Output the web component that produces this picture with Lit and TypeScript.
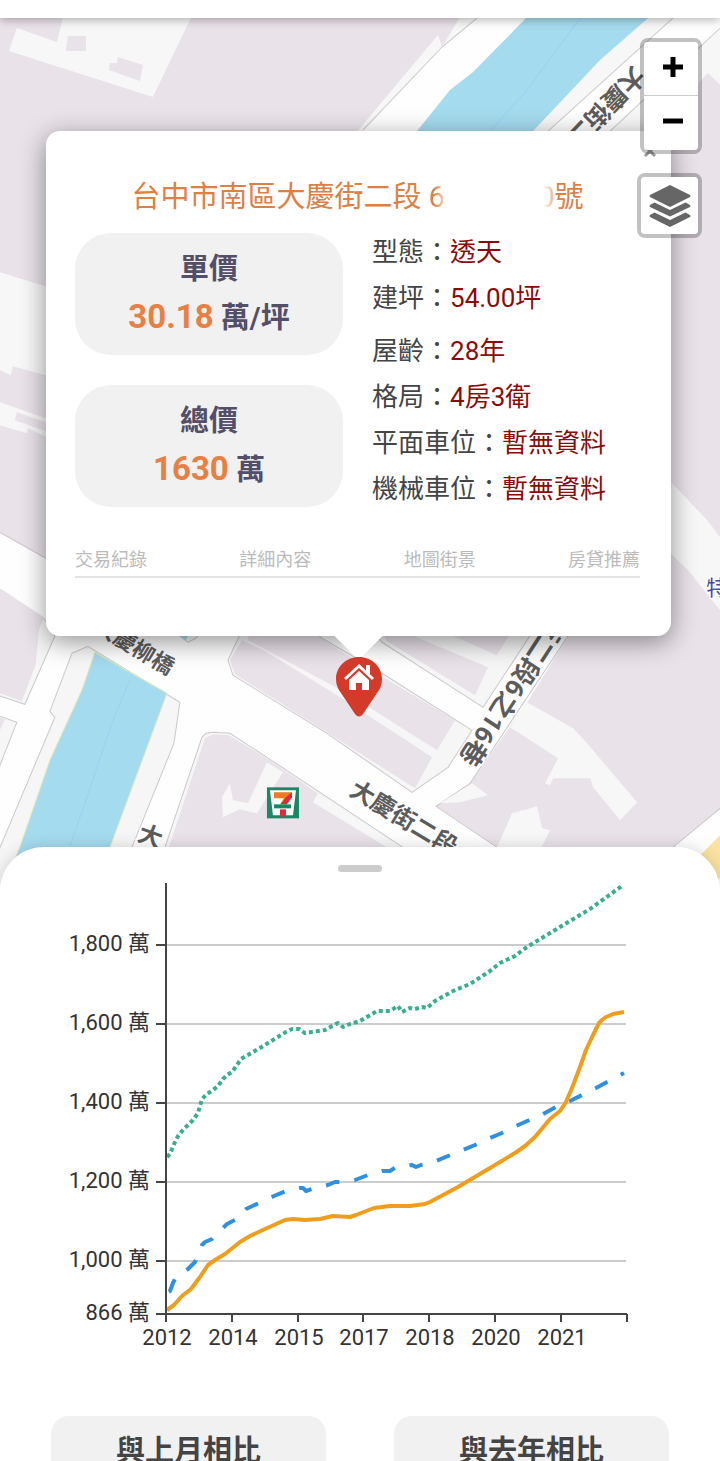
import { LitElement, html, css, svg } from "lit";
import { customElement } from "lit/decorators.js";

const FONT = css`Roboto, "Noto Sans CJK TC", "Noto Sans", sans-serif`;

@customElement("map-canvas")
class MapCanvas extends LitElement {
  static styles = css`
    :host { display: block; }
    svg { display: block; width: 100%; height: 100%; }
    .block { fill: #e9e2e9; }
    .light { fill: #f7f7f7; }
    .lot { fill: #f6f6f6; stroke: #cbc9cb; stroke-width: 1; }
    .edge { fill: none; stroke: #cbc9cb; stroke-width: 1; }
    .road { fill: #fefefe; }
    .river { fill: #a5dbef; }
    .bank { stroke: #dfe6b8; stroke-width: 1; }
    .flow { fill: none; stroke: #97d3f2; stroke-width: 1; }
    .street { font-family: ${FONT}; font-weight: 700; fill: #5c5c5c; stroke: #fff; stroke-width: 3; paint-order: stroke; dominant-baseline: central; }
    .place { font-family: ${FONT}; font-size: 21px; fill: #4648a0; stroke: #fff; stroke-width: 3; paint-order: stroke; }
  `;

  render() {
    return html`
      <svg viewBox="0 18 720 873" preserveAspectRatio="xMidYMin slice" aria-label="地圖">
        <rect class="block" x="-400" y="18" width="1520" height="900" />

        <g>
          <polygon class="light" points="63,18 191,18 153,97 9,51 17,28 57,42" />
          <polygon class="block" points="68,36 86,36 86,51 66,51" />
          <polygon class="block" points="118,57 143,65 140,81 109,70 110,63 117,63" />
          <polygon class="light" points="0,272 80,297 80,386 46,375 13,366 11,375 0,370" />
          <polygon class="light" points="0,402 80,430 80,452 28,428 27,433 0,425" />
          <polygon class="block" points="17,412 60,427 60,436 15,420" />
        </g>

        <g>
          <polygon class="light" points="470,0 720,0 720,85 708,73 640,140 350,140 438,35 442,47" />
          <polygon class="road" points="477,18 540,18 430,140 355,140 363,130 442,47" />
          <polyline class="edge" points="477,18 442,47 363,130" />
          <polygon class="river" points="526,18 648,18 600,60 533,131 417,131 450,90 473,72" />
          <polyline class="flow" points="580,18 527,90 490,131" />
          <polygon class="road" points="673,18 730,18 605,136 542,136" />
          <polyline class="edge" points="673,18 548,131" />
          <polyline class="edge" points="720,28 610,131" />
          <text class="street" font-size="25" transform="translate(640 71) rotate(134)">大慶街二段</text>
        </g>

        <g>
          <polygon class="road" points="0,532 46,558 200,625 575,625 527,702 470,783 436,806 497,847 560,900 0,900" />
          <polyline class="edge" points="0,532 46,558" />
          <polyline class="edge" points="575,625 470,783 436,806 497,847" />

          <polygon class="lot" points="-5,586 44,618 55,636 25,704 -5,694" />
          <polygon class="block" points="0,588 44,617 39,630 36,664 22,701 0,693" />
          <polygon class="lot" points="-5,714 17,722 -5,778" />
          <polygon class="block" points="0,717 5,719 0,730" />

          <polygon class="lot" points="72,653 88,646 180,702 174,743 132,847 110,895 -20,895 55,717 50,711" />
          <polygon class="river bank" points="95,652 167,693 110,847 90,895 0,895 20,847 50,760 82,690" />
          <polyline class="flow" points="130,680 113,720 70,847" />
          <polygon class="lot" points="172,630 202,630 196,638 188,642" />
          <polygon class="river" points="174,630 190,630 186,640" />

          <polygon class="lot" points="242,630 300,625 382,673 472,730 448,767 412,792 327,733 233,675 228,660" />
          <polygon class="block" points="250,630 300,625 375,672 455,720 437,750 347,693 248,640" />
          <polygon class="block" points="242,640 264,650 345,700 432,757 415,788 327,732 235,674 230,660" />
          <polygon class="lot" points="370,628 540,620 483,707 382,642" />
          <polygon class="block" points="380,628 400,630 488,667 475,695 387,641" />
          <polygon class="block" points="440,630 512,630 497,655" />

          <polygon class="lot" points="165,847 202,737 206,733 213,732 230,733 267,757 403,847 460,895 150,895" />
          <polygon class="block" points="169,847 205,738 213,734 229,735 267,758 360,822 403,850 440,895 155,895" />
          <polygon class="light" points="267,762 283,772 257,813 240,809 223,817 222,797 230,783 233,800 248,803" />
          <polygon class="light" points="318,793 403,849 395,852 313,802" />

          <polygon class="light" points="527,702 573,728 587,743 637,802 620,820 593,787 590,778 553,778 550,785 545,783 558,758 510,727" />
          <polygon class="light" points="472,783 488,795 460,802 440,803" />
          <polygon class="light" points="512,813 537,806 542,828 550,830 540,850 497,847" />
        </g>

        <g>
          <polygon class="light" points="665,475 672,483 707,520 720,537 720,610 688,570 665,548" />
          <polygon class="road" points="675,845 720,808 760,775 760,900 640,900" />
          <polyline class="edge" points="655,862 675,845 720,808" />
          <polygon points="700,855 720,835 740,820 740,860 705,890" fill="#fae3a0" />
        </g>

        <g>
          <text class="street" font-size="22" transform="translate(172 669) rotate(31)" text-anchor="end">大慶柳橋</text>
          <text class="street" font-size="24" transform="translate(352 787) rotate(31)">大慶街二段</text>
          <text class="street" font-size="24" transform="translate(139 832) rotate(20)">大</text>
          <text class="street" font-size="26" transform="translate(466 763) rotate(123)" text-anchor="end">大慶街二段6之16巷</text>
          <text class="place" x="706" y="595">特</text>
        </g>

        <g>
          <rect x="267" y="787" width="32" height="31" fill="#1a8765" />
          <path d="M270 790H296L293 815H273Z" fill="#fff" />
          <path d="M274 792H292V796L286 804H280L284 798H274Z" fill="#ee7a27" />
          <path d="M292 792V797L287 804H281L286 797Z" fill="#df2a37" />
          <path d="M280 809H286V816H280Z" fill="#df2a37" />
          <rect x="274" y="804" width="17" height="4" fill="#1a8765" />
        </g>
      </svg>
    `;
  }
}

@customElement("price-popup")
class PricePopup extends LitElement {
  static styles = css`
    :host { display: block; position: relative; font-family: ${FONT}; }
    .card { position: relative; box-sizing: border-box; background: #fff; border-radius: 14px; padding: 45px 31px 58px 29px; box-shadow: 0 6px 26px rgba(0, 0, 0, 0.42); }
    .tip { position: absolute; left: 50%; bottom: -24px; width: 48px; height: 24px; margin-left: -24px; background: #fff; clip-path: polygon(0 0, 100% 0, 50% 100%); }
    .close { position: absolute; top: 10px; right: 14px; width: 14px; height: 18px; padding: 0; border: 0; background: none; }
    .close svg { display: block; }
    h1 { margin: 0 0 14px; font-size: 29px; line-height: 43px; font-weight: 400; color: #dd8045; text-align: center; white-space: nowrap; }
    .veil { display: inline-flex; justify-content: space-between; width: 126px; -webkit-mask-image: linear-gradient(90deg, #000 5px, transparent 20px, transparent 114px, #000 132px); mask-image: linear-gradient(90deg, #000 5px, transparent 20px, transparent 114px, #000 132px); }
    .body { display: grid; grid-template-columns: 1fr 1fr; column-gap: 29px; }
    .prices { display: grid; gap: 30px; align-content: start; }
    .price { height: 122px; box-sizing: border-box; padding-top: 12px; border-radius: 36px; background: #f1f1f1; text-align: center; color: #544f69; font-weight: 700; font-size: 29px; line-height: 48px; }
    .price p { margin: 0; }
    .num { color: #e87f43; font-size: 33px; }
    dl { margin: -4px 0 0; font-size: 26px; line-height: 46px; color: #444; white-space: nowrap; }
    dl div { display: flex; }
    dl div:nth-child(2) { margin-bottom: 7px; }
    dt, dd { margin: 0; }
    dd { color: #8b0a0a; }
    nav { display: flex; justify-content: space-between; margin-top: 32px; border-bottom: 2px solid #e4e4e4; }
    nav a { color: #bbb; font-size: 18px; line-height: 32px; text-decoration: none; }
  `;

  private facts = [
    ["型態", "透天"],
    ["建坪", "54.00坪"],
    ["屋齡", "28年"],
    ["格局", "4房3衛"],
    ["平面車位", "暫無資料"],
    ["機械車位", "暫無資料"],
  ];
  private tabs = ["交易紀錄", "詳細內容", "地圖街景", "房貸推薦"];

  render() {
    return html`
      <article class="card">
        <button class="close" aria-label="關閉">
          <svg width="14" height="18" viewBox="0 0 14 18"><path d="M2 5 12 15M12 5 2 15" stroke="#999" stroke-width="3" /></svg>
        </button>
        <h1>台中市南區大慶街二段 <span class="veil"><span>6</span><span>0</span></span>號</h1>
        <div class="body">
          <div class="prices">
            <section class="price"><p>單價</p><p><span class="num">30.18</span> 萬/坪</p></section>
            <section class="price"><p>總價</p><p><span class="num">1630</span> 萬</p></section>
          </div>
          <dl>
            ${this.facts.map(([k, v]) => html`<div><dt>${k}：</dt><dd>${v}</dd></div>`)}
          </dl>
        </div>
        <nav>${this.tabs.map((t) => html`<a href="#">${t}</a>`)}</nav>
      </article>
      <div class="tip"></div>
    `;
  }
}

@customElement("map-controls")
class MapControls extends LitElement {
  static styles = css`
    :host { display: flex; flex-direction: column; align-items: flex-end; gap: 19px; }
    .bar { border: 4px solid rgba(0, 0, 0, 0.24); border-radius: 8px; background-clip: padding-box; }
    button { display: grid; place-items: center; box-sizing: border-box; width: 54px; height: 54px; padding: 0 0 4px 4px; border: 0; background: #fff; border-radius: 0 0 4px 4px; }
    .plus { border-bottom: 1px solid #ccc; border-radius: 4px 4px 0 0; }
    .layers { width: 57px; height: 57px; padding: 0; border-radius: 4px; }
  `;

  render() {
    return html`
      <div class="bar">
        <button class="plus" aria-label="放大">
          <svg width="20" height="20" viewBox="0 0 20 20"><path d="M0 10H20M10 0V20" stroke="#000" stroke-width="5" /></svg>
        </button>
        <button aria-label="縮小">
          <svg width="20" height="20" viewBox="0 0 20 20"><path d="M0 10H20" stroke="#000" stroke-width="5" /></svg>
        </button>
      </div>
      <div class="bar">
        <button class="layers" aria-label="圖層">
          <svg width="42" height="42" viewBox="0 0 42 42" fill="#666">
            <path d="M21 0 41 10Q42 11 41 12L21 22 1 12Q0 11 1 10Z" />
            <path d="M5.500 17.500 21 25 36.500 17.500 41 20Q42 21 41 22L21 31.500 1 22Q0 21 1 20Z" />
            <path d="M5.500 27.500 21 35 36.500 27.500 41 30Q42 31 41 32L21 42 1 32Q0 31 1 30Z" />
          </svg>
        </button>
      </div>
    `;
  }
}

const TRENDS = [
  {
    color: "#3aae8f", dash: "4 3", offset: 0,
    points: "167,1157 170,1154 172,1149 175,1142 178,1136 183,1130 188,1125 193,1120 198,1113 200,1106 202,1099 207,1094 213,1090 218,1086 223,1079 227,1075 232,1072 237,1065 241,1059 248,1055 260,1048 273,1040 286,1032 292,1029 299,1029 305,1033 325,1030 332,1026 338,1023 343,1027 350,1024 360,1021 377,1011 390,1011 398,1006 402,1012 410,1008 415,1009 422,1007 427,1008 435,1001 453,991 470,984 490,971 500,963 515,956 527,947 560,927 590,909 622,886",
  },
  {
    color: "#2f90dd", dash: "14 15", offset: -3,
    points: "166,1293 170,1291 173,1283 175,1279 188,1269 195,1262 202,1245 205,1242 212,1239 224,1227 227,1224 235,1220 246,1209 259,1203 274,1196 286,1191 300,1188 303,1188 306,1191 312,1189 328,1185 335,1182 341,1182 355,1180 368,1175 382,1171 390,1171 396,1167 412,1165 416,1167 421,1165 436,1161 448,1156 463,1150 475,1145 490,1138 502,1133 516,1126 543,1114 556,1107 570,1101 596,1088 624,1073",
  },
  {
    color: "#ef9d1d", dash: "none", offset: 0,
    points: "167,1310 174,1305 182,1296 191,1289 200,1277 208,1265 215,1260 225,1254 240,1242 250,1236 265,1229 285,1220 293,1219 305,1220 320,1219 333,1216 350,1217 356,1215 374,1208 390,1206 410,1206 425,1204 430,1202 458,1187 490,1168 515,1153 525,1146 535,1137 550,1119 560,1111 566,1102 572,1088 580,1067 586,1050 593,1035 599,1023 602,1020 606,1017 613,1014 624,1012",
  },
];

@customElement("price-trend")
class PriceTrend extends LitElement {
  static styles = css`
    :host { display: block; }
    svg { display: block; width: 100%; height: auto; }
    text { font-family: ${FONT}; font-size: 22px; fill: #333; }
    .grid { stroke: #ccc; stroke-width: 2; }
    .axis { fill: none; stroke: #444; stroke-width: 2; }
    .line { fill: none; stroke-width: 4; stroke-linejoin: round; }
  `;

  private rows: [string, number][] = [["1,800 萬", 945], ["1,600 萬", 1024], ["1,400 萬", 1103], ["1,200 萬", 1182], ["1,000 萬", 1261], ["866 萬", 1314]];
  private years = ["2012", "2014", "2015", "2017", "2018", "2020", "2021", ""];

  render() {
    return html`
      <svg viewBox="0 883 720 472" role="img" aria-label="價格走勢">
        ${this.rows.map(([label, y], i) => svg`
          ${i < 5 ? svg`<path class="grid" d="M166 ${y}H626" />` : ""}
          <path class="axis" d="M156 ${y}H166" />
          <text x="150" y=${y + 6} text-anchor="end">${label}</text>`)}
        ${this.years.map((year, i) => svg`
          <path class="axis" d="M${166 + Math.round(i * 65.8)} 1314V1322" />
          <text x=${167 + Math.round(i * 65.8)} y="1345" text-anchor="middle">${year}</text>`)}
        ${TRENDS.map((t) => svg`<polyline class="line" points=${t.points} stroke=${t.color} stroke-dasharray=${t.dash} stroke-dashoffset=${t.offset} />`)}
        <path class="axis" d="M166 883V1314H627" />
      </svg>
    `;
  }
}

@customElement("app-root")
class AppRoot extends LitElement {
  static styles = css`
    :host { display: flex; flex-direction: column; height: 100vh; overflow: hidden; background: #fff; font-family: ${FONT}; }
    header { position: relative; z-index: 1; height: 18px; flex: none; background: #fff; box-shadow: 0 2px 10px rgba(0, 0, 0, 0.3); }
    .map { position: relative; flex: 1; display: flex; flex-direction: column; align-items: center; box-sizing: border-box; padding: 113px 49px 0 46px; }
    map-canvas { position: absolute; inset: 0 0 -44px; }
    map-controls { position: absolute; top: 20px; right: 18px; }
    price-popup { width: 100%; max-width: 640px; }
    .pin { position: relative; display: block; margin-top: 20px; }
    .sheet { position: relative; flex: none; height: 42vh; overflow: hidden; box-sizing: border-box; border-radius: 44px 44px 0 0; background: #fff; }
    .shade { position: relative; flex: none; border-radius: 44px 44px 0 0; box-shadow: 0 0 16px rgba(0, 0, 0, 0.16); }
    .handle { width: 44px; height: 7px; margin: 18px auto 11px; border-radius: 4px; background: #ccc; }
    .compare { display: grid; grid-template-columns: 1fr 1fr; gap: 68px; padding: 61px 51px 40px; }
    .compare section { height: 140px; border-radius: 18px; background: #f1f1f1; text-align: center; }
    h2 { margin: 0; padding-top: 13px; font-size: 29px; line-height: 44px; font-weight: 700; color: #444; }
  `;

  render() {
    return html`
      <header></header>
      <main class="map">
        <map-canvas></map-canvas>
        <price-popup></price-popup>
        <svg class="pin" width="46" height="62" viewBox="0 0 46 62">
          <path d="M23 1C10 1 0 11 0 23C0 29 2 33 5 37L19 58Q23 63 27 58L41 37C44 33 46 29 46 23C46 11 36 1 23 1Z" fill="#d43a2a" />
          <path d="M9 23 23 10 37 23" fill="none" stroke="#fff" stroke-width="3" />
          <path d="M30 9H34V19L30 15Z" fill="#fff" />
          <path d="M13 24 23 15 33 24V34H26V27H20V34H13Z" fill="#fff" />
        </svg>
        <map-controls></map-controls>
      </main>
      <div class="shade">
        <div class="sheet">
          <div class="handle"></div>
          <price-trend></price-trend>
          <div class="compare">
            <section><h2>與上月相比</h2></section>
            <section><h2>與去年相比</h2></section>
          </div>
        </div>
      </div>
    `;
  }
}
